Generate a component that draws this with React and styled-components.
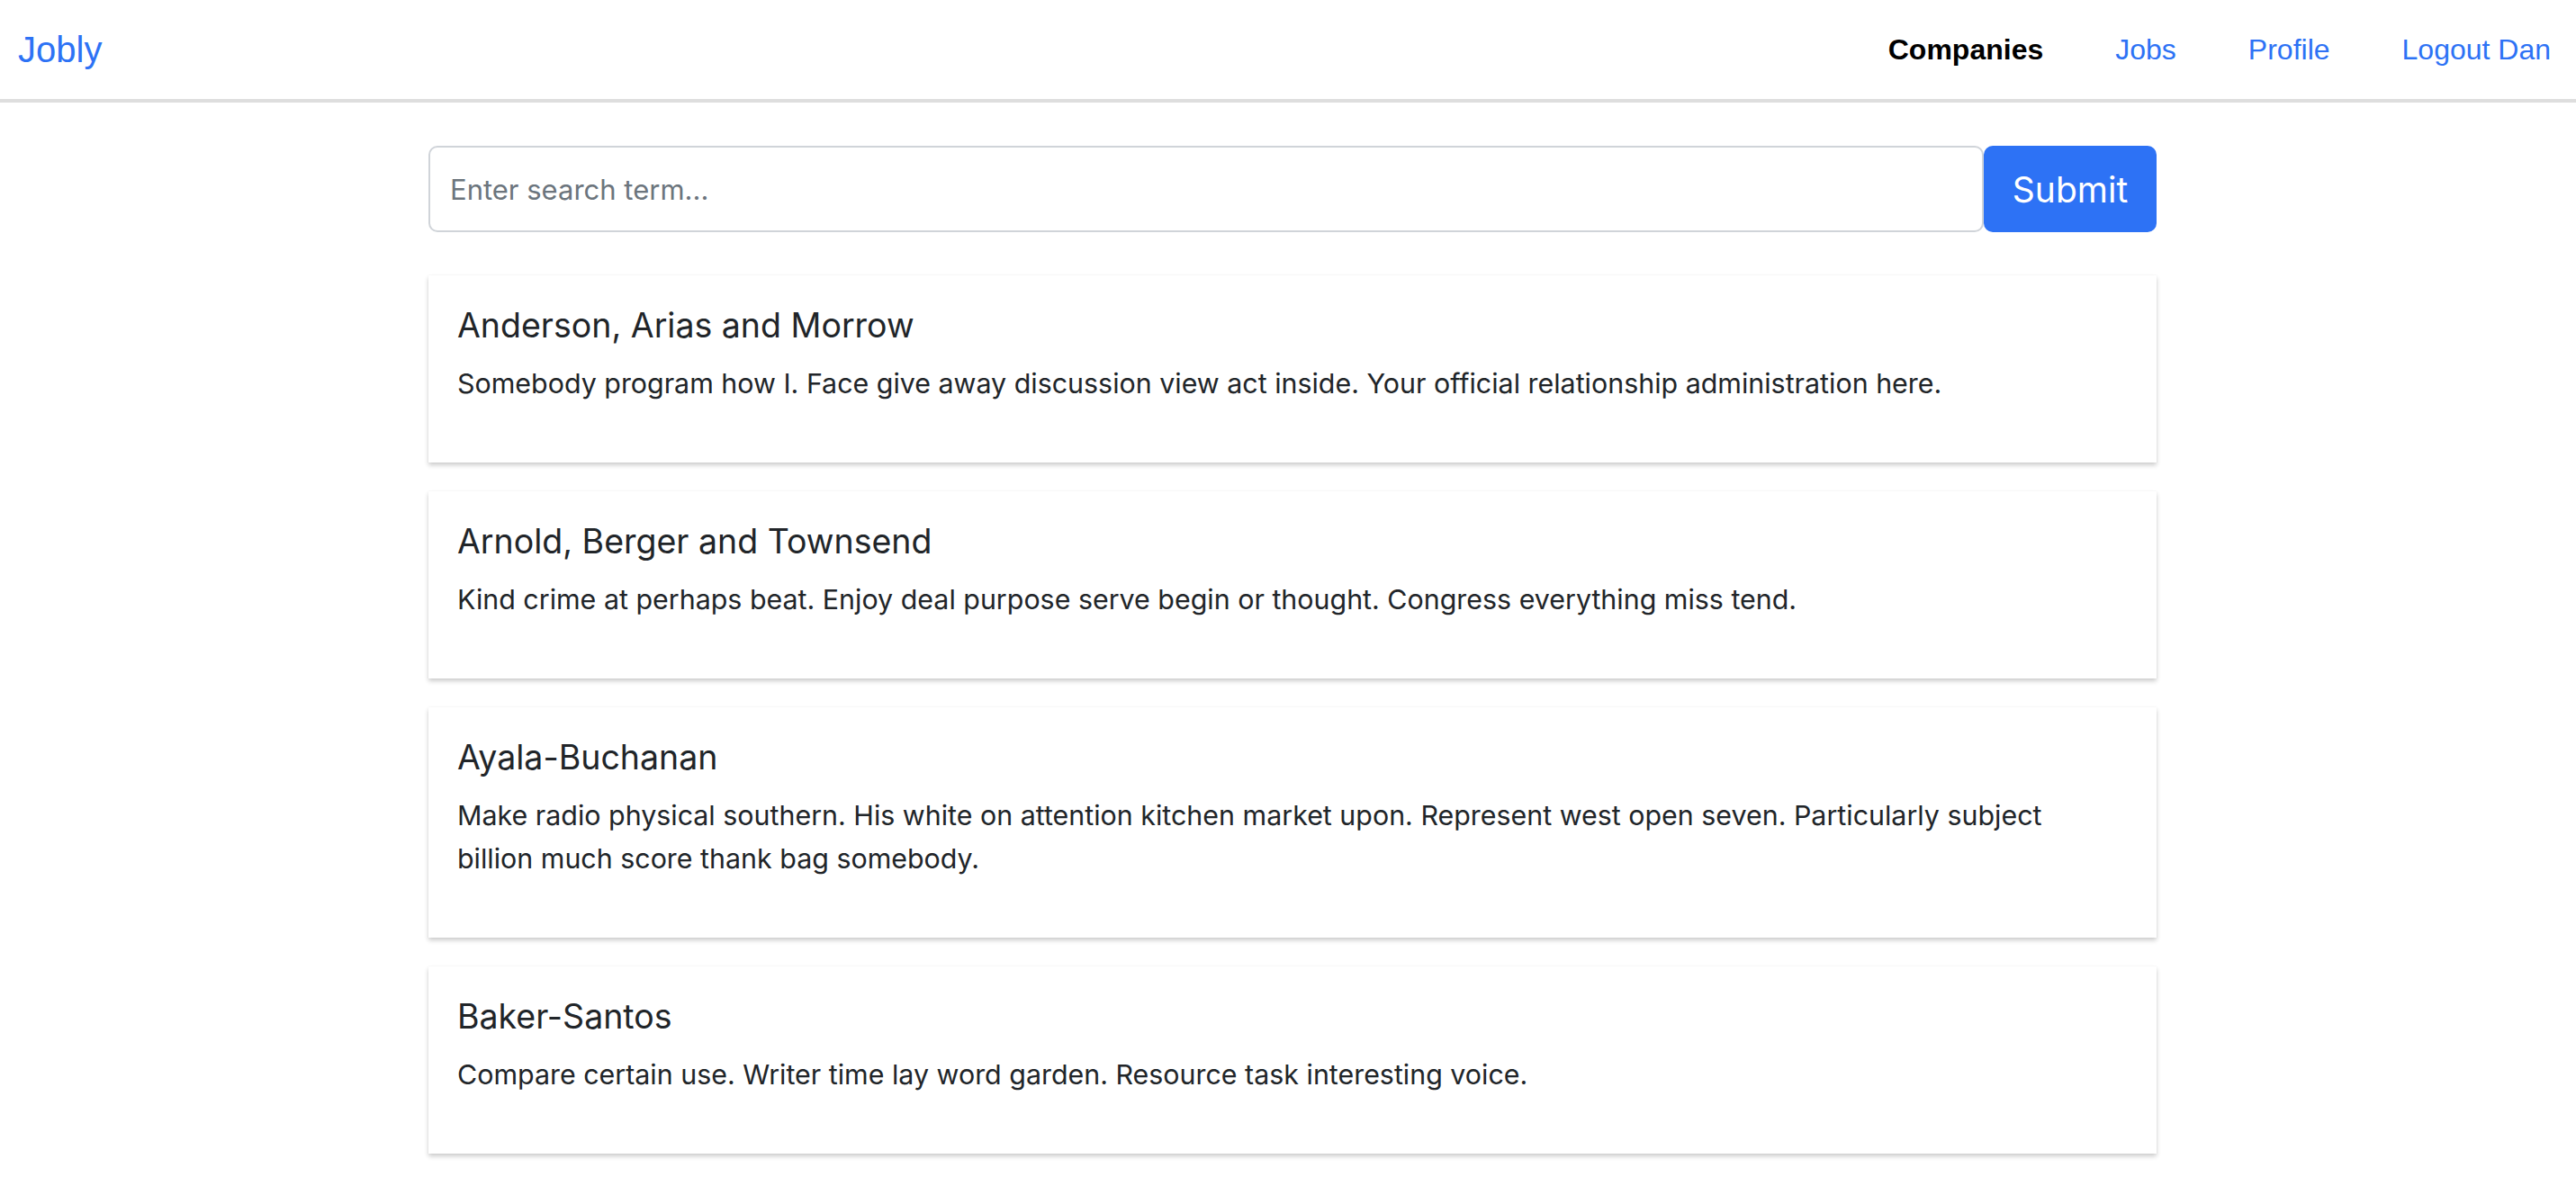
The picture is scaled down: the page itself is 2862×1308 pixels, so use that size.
import styled, { createGlobalStyle } from "styled-components";

const GlobalStyle = createGlobalStyle`
  * {
    box-sizing: border-box;
  }

  body {
    margin: 0;
    background: #fff;
    color: #212529;
    font-family: Inter, "Noto Sans", sans-serif;
  }
`;

const Navbar = styled.nav`
  display: flex;
  align-items: center;
  justify-content: space-between;
  height: 114px;
  padding: 0 28px 0 20px;
  border-bottom: 4px solid #dedede;
  font-family: "Liberation Sans", Arial, sans-serif;
`;

const Brand = styled.a`
  font-size: 40px;
  color: #2d72f5;
  text-decoration: none;
`;

const NavLinks = styled.ul`
  display: flex;
  gap: 80px;
  margin: 0;
  padding: 0;
  list-style: none;
`;

const NavLink = styled.a`
  font-size: 32px;
  font-weight: ${(props) => (props.$active ? 700 : 400)};
  color: ${(props) => (props.$active ? "#000" : "#2d72f5")};
  text-decoration: none;
`;

const Main = styled.main`
  width: 1920px;
  margin: 0 0 0 calc(50% - 955px);
  padding-top: 48px;
`;

const SearchForm = styled.form`
  display: flex;
  height: 96px;
  margin-bottom: 48px;
`;

const SearchInput = styled.input`
  flex: 1;
  padding: 0 22px;
  border: 2px solid #d0d4d9;
  border-radius: 10px;
  font-family: Inter, sans-serif;
  font-size: 31px;
  color: #212529;

  &::placeholder {
    color: #6c757d;
  }
`;

const SubmitButton = styled.button`
  width: 192px;
  border: none;
  border-radius: 10px;
  background: #2d72f5;
  color: #fff;
  font-family: Inter, sans-serif;
  font-size: 39px;
`;

const Card = styled.div`
  margin-bottom: 32px;
  padding: 33px 56px 32px 32px;
  background: #fff;
  box-shadow: 0 0 1px rgba(0, 0, 0, 0.08), 0 3px 5px rgba(0, 0, 0, 0.2);
`;

const CardTitle = styled.h6`
  margin: 0 0 18px;
  font-size: 37.5px;
  font-weight: 400;
  line-height: 45px;
`;

const CardText = styled.p`
  margin: 0 0 32px;
  font-size: 30.4px;
  line-height: 48px;
`;

const companies = [
  {
    name: "Anderson, Arias and Morrow",
    description:
      "Somebody program how I. Face give away discussion view act inside. Your official relationship administration here.",
  },
  {
    name: "Arnold, Berger and Townsend",
    description:
      "Kind crime at perhaps beat. Enjoy deal purpose serve begin or thought. Congress everything miss tend.",
  },
  {
    name: "Ayala-Buchanan",
    description:
      "Make radio physical southern. His white on attention kitchen market upon. Represent west open seven. Particularly subject billion much score thank bag somebody.",
  },
  {
    name: "Baker-Santos",
    description:
      "Compare certain use. Writer time lay word garden. Resource task interesting voice.",
  },
];

export default function App() {
  return (
    <>
      <GlobalStyle />
      <Navbar>
        <Brand href="#">Jobly</Brand>
        <NavLinks>
          <li>
            <NavLink href="#" $active>
              Companies
            </NavLink>
          </li>
          <li>
            <NavLink href="#">Jobs</NavLink>
          </li>
          <li>
            <NavLink href="#">Profile</NavLink>
          </li>
          <li>
            <NavLink href="#">Logout Dan</NavLink>
          </li>
        </NavLinks>
      </Navbar>
      <Main>
        <SearchForm onSubmit={(e) => e.preventDefault()}>
          <SearchInput placeholder="Enter search term..." />
          <SubmitButton type="submit">Submit</SubmitButton>
        </SearchForm>
        {companies.map((c) => (
          <Card key={c.name}>
            <CardTitle>{c.name}</CardTitle>
            <CardText>{c.description}</CardText>
          </Card>
        ))}
      </Main>
    </>
  );
}
